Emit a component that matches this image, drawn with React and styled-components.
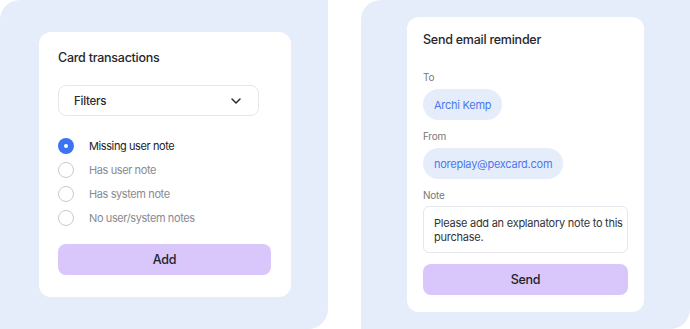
import React from "react";
import styled, { createGlobalStyle } from "styled-components";

const GlobalStyle = createGlobalStyle`
  html, body {
    margin: 0;
    padding: 0;
    background: #ffffff;
  }
  body {
    font-family: Inter, "Noto Sans", "Liberation Sans", sans-serif;
    letter-spacing: -0.25px;
    -webkit-font-smoothing: antialiased;
  }
  * { box-sizing: border-box; }
`;

const Page = styled.div`
  display: flex;
  gap: 33px;
  width: 690px;
  height: 329px;
  overflow: hidden;
`;

const Panel = styled.div`
  flex: 0 0 ${(p) => p.$width}px;
  height: 329px;
  background: #e5edfa;
  border-radius: 20px 0 20px 0;
  display: flex;
  align-items: center;
  justify-content: center;
  padding-left: ${(p) => p.$shift || 0}px;
`;

const Card = styled.div`
  width: ${(p) => p.$width}px;
  height: ${(p) => p.$height}px;
  background: #ffffff;
  border-radius: 12px;
  display: flex;
  flex-direction: column;
  padding: ${(p) => p.$pad};
`;

const Title = styled.div`
  font-size: 12.5px;
  line-height: 16px;
  font-weight: 500;
  color: #26262c;
`;

const Select = styled.div`
  width: 201px;
  height: 31px;
  margin-top: 19px;
  border: 1px solid #e6e6ec;
  border-radius: 8px;
  display: flex;
  align-items: center;
  justify-content: space-between;
  padding: 0 17px 0 15px;
  font-size: 11.5px;
  font-weight: 500;
  color: #2a2a30;
`;

const Options = styled.div`
  display: flex;
  flex-direction: column;
  gap: 8px;
  margin-top: 22px;
`;

const Option = styled.label`
  display: flex;
  align-items: center;
  gap: 15px;
  height: 16px;
  font-size: 11px;
  letter-spacing: -0.4px;
  color: ${(p) => (p.$checked ? "#222228" : "#8a8a90")};
`;

const Radio = styled.span`
  width: 16px;
  height: 16px;
  border-radius: 50%;
  flex: 0 0 16px;
  background: ${(p) => (p.$checked ? "#3b73f5" : "#ffffff")};
  border: ${(p) => (p.$checked ? "none" : "1px solid #c9c9cf")};
  display: flex;
  align-items: center;
  justify-content: center;

  &::after {
    content: "";
    display: ${(p) => (p.$checked ? "block" : "none")};
    width: 4px;
    height: 4px;
    border-radius: 50%;
    background: #ffffff;
  }
`;

const Button = styled.button`
  height: 31px;
  margin-top: ${(p) => p.$mt}px;
  border: none;
  border-radius: 8px;
  background: #d9c6fb;
  font-family: inherit;
  letter-spacing: inherit;
  font-size: 12.5px;
  font-weight: 500;
  color: #222228;
  cursor: pointer;
`;

const Label = styled.div`
  margin-top: ${(p) => p.$mt}px;
  font-size: 10px;
  line-height: 12px;
  color: #77777d;
`;

const Pill = styled.div`
  align-self: flex-start;
  height: 31px;
  margin-top: 6px;
  padding: 0 11px;
  border-radius: 16px;
  background: #e5edfa;
  display: flex;
  align-items: center;
  font-size: 11px;
  color: #4a78ef;
`;

const NoteBox = styled.div`
  height: 47px;
  margin-top: 5px;
  border: 1px solid #e6e6ec;
  border-radius: 6px;
  padding: 9px 4px 0 10px;
  font-size: 11px;
  line-height: 14px;
  color: #333338;
`;

const Chevron = () => (
  <svg width="10" height="6" viewBox="0 0 10 6" fill="none">
    <path d="M1 1l4 4 4-4" stroke="#2a2a30" strokeWidth="1.5" strokeLinecap="round" strokeLinejoin="round" />
  </svg>
);

const filters = [
  "Missing user note",
  "Has user note",
  "Has system note",
  "No user/system notes",
];

export default function App() {
  return (
    <>
      <GlobalStyle />
      <Page>
        <Panel $width={328} $shift={2}>
          <Card $width={252} $height={265} $pad="18px 20px 22px 19px">
            <Title>Card transactions</Title>
            <Select>
              Filters
              <Chevron />
            </Select>
            <Options>
              {filters.map((f, i) => (
                <Option key={f} $checked={i === 0}>
                  <Radio $checked={i === 0} />
                  {f}
                </Option>
              ))}
            </Options>
            <Button $mt={18}>Add</Button>
          </Card>
        </Panel>
        <Panel $width={329}>
          <Card $width={237} $height={295} $pad="15px 16px 17px 16px">
            <Title>Send email reminder</Title>
            <Label $mt={23}>To</Label>
            <Pill>Archi Kemp</Pill>
            <Label $mt={10}>From</Label>
            <Pill>noreplay@pexcard.com</Pill>
            <Label $mt={10}>Note</Label>
            <NoteBox>Please add an explanatory note to this purchase.</NoteBox>
            <Button $mt={11}>Send</Button>
          </Card>
        </Panel>
      </Page>
    </>
  );
}
